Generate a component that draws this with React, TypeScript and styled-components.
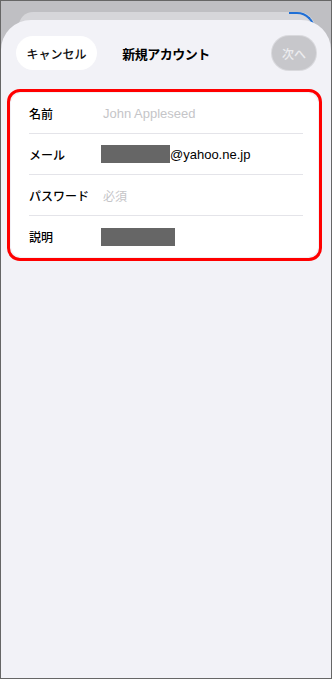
import React from "react";
import styled, { createGlobalStyle } from "styled-components";

const Global = createGlobalStyle`
  html, body { margin: 0; padding: 0; }
  body { font-family: "Liberation Sans", "Noto Sans CJK JP", sans-serif; }
  * { box-sizing: border-box; }
`;

const Screen = styled.div`
  width: 332px;
  height: 679px;
  border: 1px solid #666666;
  background: #bfbfc3;
  overflow: hidden;
  display: flex;
  flex-direction: column;
  padding-top: 11px;
`;

const BackSheet = styled.div`
  position: relative;
  height: 20px;
  margin: 0 16px -12px 18px;
  background: #d6d6da;
  border-radius: 14px 16px 0 0;
  &::after {
    content: "";
    position: absolute;
    top: 0;
    right: 0;
    width: 24px;
    height: 16px;
    border-top: 2.5px solid #1f6fd6;
    border-right: 2.5px solid #1f6fd6;
    border-top-right-radius: 18px;
  }
`;

const Sheet = styled.div`
  position: relative;
  flex: 1;
  background: #f2f2f7;
  border-radius: 30px 30px 0 0;
  display: flex;
  flex-direction: column;
`;

const Header = styled.div`
  display: grid;
  grid-template-columns: 1fr auto 1fr;
  align-items: center;
  padding: 16px 15px 0 15px;
  height: 50px;
`;

const CancelButton = styled.div`
  justify-self: start;
  width: 81px;
  height: 34px;
  border-radius: 17px;
  background: #ffffff;
  display: flex;
  align-items: center;
  justify-content: center;
  font-family: "Noto Sans CJK JP", sans-serif;
  font-size: 12px;
  font-weight: 500;
  color: #111111;
`;

const Title = styled.div`
  font-family: "Noto Sans CJK JP", sans-serif;
  font-size: 13px;
  letter-spacing: -0.5px;
  font-weight: 700;
  color: #000000;
`;

const NextButton = styled.div`
  justify-self: end;
  width: 44px;
  height: 34px;
  border-radius: 17px;
  background: #c7c7cb;
  box-shadow: 0 0 0 1px #d9d9dd;
  display: flex;
  align-items: center;
  justify-content: center;
  font-family: "Noto Sans CJK JP", sans-serif;
  font-size: 12px;
  font-weight: 500;
  color: #ececef;
`;

const Highlight = styled.div`
  margin: 19px 9px 0 6px;
  border: 3px solid #ff0000;
  border-radius: 13px;
  padding: 1px;
`;

const Card = styled.div`
  background: #ffffff;
  border-radius: 11px;
  display: flex;
  flex-direction: column;
`;

const Row = styled.div<{ $last?: boolean }>`
  height: 41px;
  margin: 0 15px 0 18px;
  display: flex;
  align-items: center;
  border-bottom: ${(p) => (p.$last ? "none" : "1px solid #e4e4e9")};
`;

const Label = styled.div`
  width: 72px;
  flex: none;
  font-family: "Noto Sans CJK JP", sans-serif;
  font-size: 12px;
  font-weight: 500;
  color: #000000;
`;

const Value = styled.div<{ $placeholder?: boolean; $cjk?: boolean }>`
  display: flex;
  align-items: center;
  font-family: ${(p) =>
    p.$cjk ? '"Noto Sans CJK JP", sans-serif' : '"Liberation Sans", "Noto Sans CJK JP", sans-serif'};
  font-size: ${(p) => (p.$cjk ? "12px" : "13px")};
  color: ${(p) => (p.$placeholder ? "#c5c5c8" : "#000000")};
  padding-left: ${(p) => (p.$placeholder ? "2px" : "0")};
`;

const Redacted = styled.span<{ $w: number }>`
  display: inline-block;
  width: ${(p) => p.$w}px;
  height: 18px;
  background: #666666;
`;

export default function App() {
  return (
    <>
      <Global />
      <Screen>
        <BackSheet />
        <Sheet>
          <Header>
            <CancelButton>キャンセル</CancelButton>
            <Title>新規アカウント</Title>
            <NextButton>次へ</NextButton>
          </Header>
          <Highlight>
            <Card>
              <Row>
                <Label>名前</Label>
                <Value $placeholder>John Appleseed</Value>
              </Row>
              <Row>
                <Label>メール</Label>
                <Value>
                  <Redacted $w={69} />
                  @yahoo.ne.jp
                </Value>
              </Row>
              <Row>
                <Label>パスワード</Label>
                <Value $placeholder $cjk>必須</Value>
              </Row>
              <Row $last>
                <Label>説明</Label>
                <Value>
                  <Redacted $w={74} />
                </Value>
              </Row>
            </Card>
          </Highlight>
        </Sheet>
      </Screen>
    </>
  );
}
